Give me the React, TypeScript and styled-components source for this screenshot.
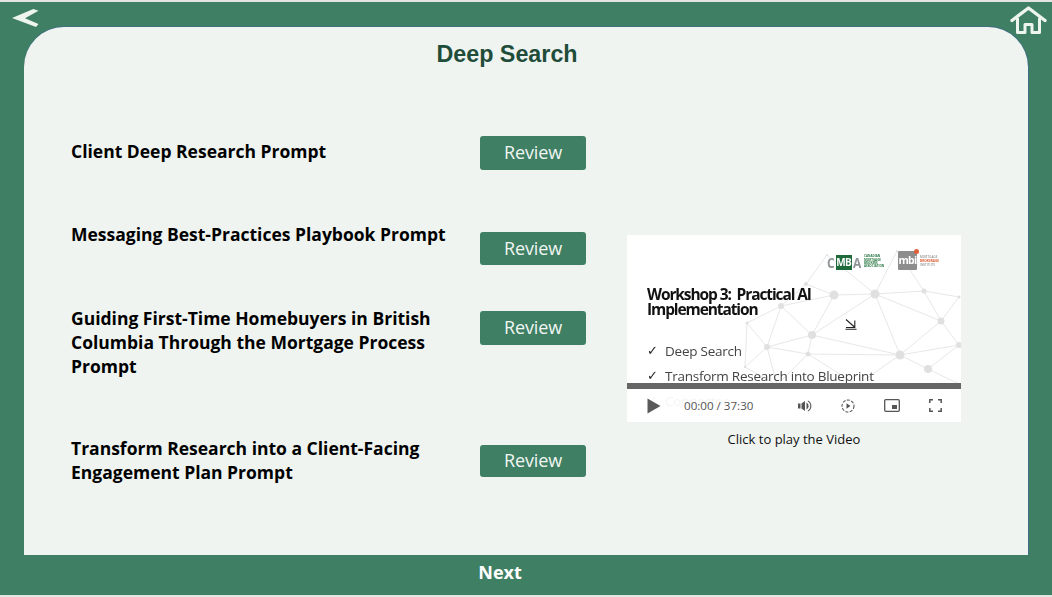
import React from "react";
import styled, { createGlobalStyle } from "styled-components";

const prompts = [
  "Client Deep Research Prompt",
  "Messaging Best-Practices Playbook Prompt",
  "Guiding First-Time Homebuyers in British Columbia Through the Mortgage Process Prompt",
  "Transform Research into a Client-Facing Engagement Plan Prompt",
];

const reviewOffsets = [
  { top: 0, height: 34 },
  { top: 13, height: 33 },
  { top: 8, height: 34 },
  { top: 12, height: 32 },
];

const nodes: [number, number, number][] = [
  [207, 60, 4.5], [248, 59, 4.5], [297, 56, 2.5], [314, 86, 3.5], [185, 100, 4],
  [140, 112, 3], [181, 119, 2.5], [273, 120, 4.5], [301, 134, 4], [332, 110, 3],
  [179, 49, 2], [154, 71, 3], [120, 88, 1.5], [332, 62, 1.5], [200, 20, 1],
  [118, 132, 1.2], [270, 16, 1], [150, 150, 1.2], [230, 150, 1.2], [334, 150, 1],
];

const links: [number, number][] = [
  [0, 1], [1, 2], [2, 3], [1, 3], [0, 4], [1, 4], [4, 5], [4, 6], [5, 6], [6, 7],
  [4, 7], [7, 8], [3, 7], [3, 9], [8, 9], [1, 7], [10, 0], [10, 11], [11, 4], [11, 5],
  [12, 5], [12, 11], [2, 13], [3, 13], [10, 14], [14, 1], [0, 11], [7, 9], [15, 5],
  [15, 17], [5, 17], [6, 17], [6, 18], [7, 18], [8, 19], [1, 16], [2, 16], [12, 15],
];

export default function App() {
  return (
    <>
      <GlobalStyle />
      <Page>
        <TopBar>
          <BackButton type="button" aria-label="Back">
            <svg width="28" height="20" viewBox="0 0 28 20">
              <polygon points="0,10 21.300,1 26.500,2.700 13,10.200 26.500,16 24,19" fill="#eef5ef" />
            </svg>
          </BackButton>
          <HomeButton type="button" aria-label="Home">
            <svg width="37" height="29" viewBox="0 0 37 29" fill="none" stroke="#eef5ef">
              <path d="M2 14.500 18.500 2 35 14.500" strokeWidth="3.400" strokeLinejoin="round" strokeLinecap="round" />
              <path d="M7.500 12v14.500h7.500v-8h7v8h7.500V12" strokeWidth="3" strokeLinejoin="round" />
            </svg>
          </HomeButton>
        </TopBar>
        <Panel>
          <Title>Deep Search</Title>
          <Body>
            <PromptList>
              {prompts.map((prompt, i) => (
                <PromptRow key={prompt}>
                  <PromptText>{prompt}</PromptText>
                  <ReviewButton type="button" $top={reviewOffsets[i].top} $height={reviewOffsets[i].height}>
                    Review
                  </ReviewButton>
                </PromptRow>
              ))}
            </PromptList>
            <VideoColumn>
              <VideoFrame>
                <Network viewBox="0 0 334 187">
                  {links.map(([a, b]) => (
                    <line
                      key={`${a}-${b}`}
                      x1={nodes[a][0]}
                      y1={nodes[a][1]}
                      x2={nodes[b][0]}
                      y2={nodes[b][1]}
                      stroke="#e4e4e4"
                      strokeWidth="0.9"
                    />
                  ))}
                  {nodes.map(([x, y, r]) => (
                    <circle key={`${x}-${y}`} cx={x} cy={y} r={r} fill="#e0e0e0" />
                  ))}
                </Network>
                <Slide>
                  <LogoRow>
                    <CmbaLogo>
                      <LogoLetter>C</LogoLetter>
                      <LogoBox>MB</LogoBox>
                      <LogoLetter>A</LogoLetter>
                      <CmbaText>CANADIAN MORTGAGE BROKERS ASSOCIATION</CmbaText>
                    </CmbaLogo>
                    <MbiLogo>
                      <MbiBubble>mbi</MbiBubble>
                      <MbiText>
                        MORTGAGE <b>BROKERAGE</b> INSTITUTE
                      </MbiText>
                    </MbiLogo>
                  </LogoRow>
                  <SlideTitle>
                    Workshop 3:&nbsp; Practical AI
                    <br />
                    Implementation
                  </SlideTitle>
                  <SlideCursor>
                    <svg width="12" height="12" viewBox="0 0 12 12" fill="none" stroke="#222" strokeWidth="1.100">
                      <path d="M1 1.500 9.500 9M9.800 2.500v7H1M0.500 11.300h11" />
                    </svg>
                  </SlideCursor>
                  <SlideList>
                    <SlideItem>Deep Search</SlideItem>
                    <SlideItem>Transform Research into Blueprint</SlideItem>
                    <SlideItem>Connector</SlideItem>
                  </SlideList>
                </Slide>
                <PlayerOverlay>
                  <Progress />
                  <Controls>
                    <PlayGroup>
                      <svg width="14" height="16" viewBox="0 0 14 16">
                        <polygon points="0.500,0.500 13.500,8 0.500,15.500" fill="#5a5a5a" />
                      </svg>
                      <TimeLabel>00:00 / 37:30</TimeLabel>
                    </PlayGroup>
                    <IconGroup>
                      <svg width="14" height="12" viewBox="0 0 14 12" fill="#555">
                        <path d="M0 3.500h2.500v5H0zM3.500 3.500 7 1v10L3.500 8.500zM8.500 2.500c2.800 1.500 2.800 5.500 0 7zM10 .5c4.500 2.200 4.500 8.800 0 11l-.4-.8c3.600-2 3.600-7.400 0-9.400z" />
                      </svg>
                      <svg width="14" height="14" viewBox="0 0 14 14" fill="none" stroke="#555">
                        <circle cx="7" cy="7" r="6" strokeDasharray="3 1.400" strokeWidth="1.100" />
                        <polygon points="5.500,4.300 9.500,7 5.500,9.700" fill="#555" stroke="none" />
                      </svg>
                      <svg width="16" height="13" viewBox="0 0 16 13" fill="none" stroke="#555">
                        <rect x="0.700" y="0.700" width="14.600" height="11.600" rx="1" strokeWidth="1.300" />
                        <rect x="8" y="6" width="5" height="4" fill="#555" stroke="none" />
                      </svg>
                      <svg width="13" height="13" viewBox="0 0 13 13" fill="none" stroke="#555" strokeWidth="1.500">
                        <path d="M.8 4V.8H4M9 .8h3.200V4M12.200 9v3.200H9M4 12.200H.8V9" />
                      </svg>
                    </IconGroup>
                  </Controls>
                </PlayerOverlay>
              </VideoFrame>
              <Caption>Click to play the Video</Caption>
            </VideoColumn>
          </Body>
        </Panel>
        <NextBar type="button">Next</NextBar>
      </Page>
    </>
  );
}

const GlobalStyle = createGlobalStyle`
  html, body {
    margin: 0;
    padding: 0;
    background: #e4e4e2;
  }
  body {
    padding-top: 2px;
  }
  * {
    box-sizing: border-box;
  }
`;

const Page = styled.div`
  width: 1052px;
  height: 593px;
  background: #3f7f63;
  display: flex;
  flex-direction: column;
  font-family: "Open Sans", "Liberation Sans", sans-serif;
`;

const TopBar = styled.div`
  height: 25px;
  display: flex;
  justify-content: space-between;
  align-items: flex-start;
  padding: 6px 5px 0 12px;
`;

const IconButton = styled.button`
  border: 0;
  padding: 0;
  background: none;
  display: block;
  cursor: pointer;
  position: relative;
  z-index: 1;
`;

const BackButton = styled(IconButton)`
  height: 20px;
`;

const HomeButton = styled(IconButton)`
  height: 29px;
  margin-top: -2px;
`;

const Panel = styled.main`
  width: 1004px;
  height: 528px;
  margin: 0 24px;
  flex: none;
  background: #eff4f0;
  border-radius: 40px 40px 0 0;
  box-shadow: 0 -1px 0 #3f6f80, 1px 0 0 #3f6f80;
  display: flex;
  flex-direction: column;
`;

const Title = styled.h1`
  margin: 0;
  height: 109px;
  padding: 11px 38px 0 0;
  text-align: center;
  font-family: "Liberation Sans", Arial, sans-serif;
  font-size: 23.300px;
  line-height: 32px;
  font-weight: 700;
  color: #1f4d3a;
`;

const Body = styled.div`
  display: flex;
  align-items: flex-start;
  padding-left: 47px;
  gap: 41px;
`;

const PromptList = styled.div`
  width: 515px;
  display: grid;
  grid-template-rows: 83px 84px 130px auto;
`;

const PromptRow = styled.div`
  display: flex;
  justify-content: space-between;
  align-items: flex-start;
`;

const PromptText = styled.div`
  width: 385px;
  padding-top: 3px;
  font-size: 17.500px;
  line-height: 24px;
  font-weight: 700;
  color: #000;
`;

const ReviewButton = styled.button<{ $top: number; $height: number }>`
  width: 106px;
  height: ${(p) => p.$height}px;
  margin-top: ${(p) => p.$top}px;
  border: 0;
  border-radius: 3px;
  padding: 0 0 2px;
  background: #3f7f63;
  color: #f2f6f3;
  font-family: "Open Sans", sans-serif;
  font-size: 18px;
  letter-spacing: -0.1px;
  cursor: pointer;
`;

const VideoColumn = styled.div`
  width: 334px;
  margin-top: 99px;
`;

const VideoFrame = styled.div`
  position: relative;
  width: 334px;
  height: 187px;
  background: #fff;
  overflow: hidden;
`;

const Network = styled.svg`
  position: absolute;
  inset: 0;
  width: 334px;
  height: 187px;
`;

const Slide = styled.div`
  position: relative;
  height: 100%;
  padding: 15px 0 0 20px;
  filter: blur(0.25px);
`;

const LogoRow = styled.div`
  display: flex;
  justify-content: flex-end;
  align-items: flex-end;
  gap: 8px;
  height: 20px;
  padding-right: 18px;
`;

const CmbaLogo = styled.div`
  display: flex;
  align-items: center;
  gap: 0;
  height: 16px;
`;

const LogoLetter = styled.span`
  font-size: 15px;
  line-height: 16px;
  font-weight: 700;
  color: #8f9496;
  transform: scaleX(0.8);
`;

const LogoBox = styled.span`
  width: 16px;
  height: 15px;
  background: #1f6b3c;
  color: #fff;
  font-size: 10px;
  line-height: 15px;
  font-weight: 700;
  text-align: center;
  letter-spacing: -0.8px;
`;

const CmbaText = styled.span`
  width: 26px;
  margin-left: 2px;
  font-size: 3px;
  line-height: 3.400px;
  font-weight: 700;
  color: #2b7a45;
`;

const MbiLogo = styled.div`
  display: flex;
  align-items: center;
  gap: 3px;
  height: 19px;
`;

const MbiBubble = styled.span`
  position: relative;
  flex: none;
  width: 19px;
  height: 19px;
  border-radius: 1px;
  background: #8d8d8d;
  color: #fff;
  font-size: 10.500px;
  line-height: 18px;
  font-weight: 700;
  text-align: center;
  letter-spacing: -0.7px;

  &::after {
    content: "";
    position: absolute;
    top: -2px;
    right: -2px;
    width: 5px;
    height: 5px;
    border-radius: 50%;
    background: #e0603a;
  }
`;

const MbiText = styled.span`
  width: 23px;
  font-size: 3.200px;
  line-height: 4px;
  color: #777;

  b {
    color: #e0603a;
  }
`;

const SlideTitle = styled.div`
  margin-top: 17px;
  font-size: 15.500px;
  line-height: 15px;
  font-weight: 700;
  letter-spacing: -1.100px;
  color: #111;
`;

const SlideCursor = styled.div`
  position: absolute;
  left: 218px;
  top: 83px;
  line-height: 0;
`;

const SlideList = styled.ul`
  list-style: none;
  margin: 21px 0 0;
  padding: 0;
`;

const SlideItem = styled.li`
  display: flex;
  align-items: center;
  gap: 8px;
  height: 25px;
  font-size: 13.500px;
  letter-spacing: -0.25px;
  color: #444;

  &::before {
    content: "✓";
    width: 10px;
    font-family: "DejaVu Sans", sans-serif;
    font-size: 13px;
    color: #222;
  }
`;

const PlayerOverlay = styled.div`
  position: absolute;
  left: 0;
  right: 0;
  bottom: 0;
`;

const Progress = styled.div`
  height: 6px;
  background: #666;
`;

const Controls = styled.div`
  height: 33px;
  background: rgba(255, 255, 255, 0.94);
  display: flex;
  justify-content: space-between;
  align-items: center;
  padding: 0 19px 0 20px;
`;

const PlayGroup = styled.div`
  display: flex;
  align-items: center;
  gap: 23px;
`;

const TimeLabel = styled.span`
  font-size: 11.600px;
  color: #555;
`;

const IconGroup = styled.div`
  display: flex;
  align-items: center;
  gap: 29px;
`;

const Caption = styled.div`
  margin-top: 8px;
  text-align: center;
  font-size: 13px;
  line-height: 18px;
  color: #111;
`;

const NextBar = styled.button`
  width: 1000px;
  height: 40px;
  flex: none;
  border: 0;
  padding: 0 0 6px;
  background: none;
  color: #fff;
  font-family: "Open Sans", sans-serif;
  font-size: 18px;
  font-weight: 700;
  text-align: center;
  cursor: pointer;
`;
